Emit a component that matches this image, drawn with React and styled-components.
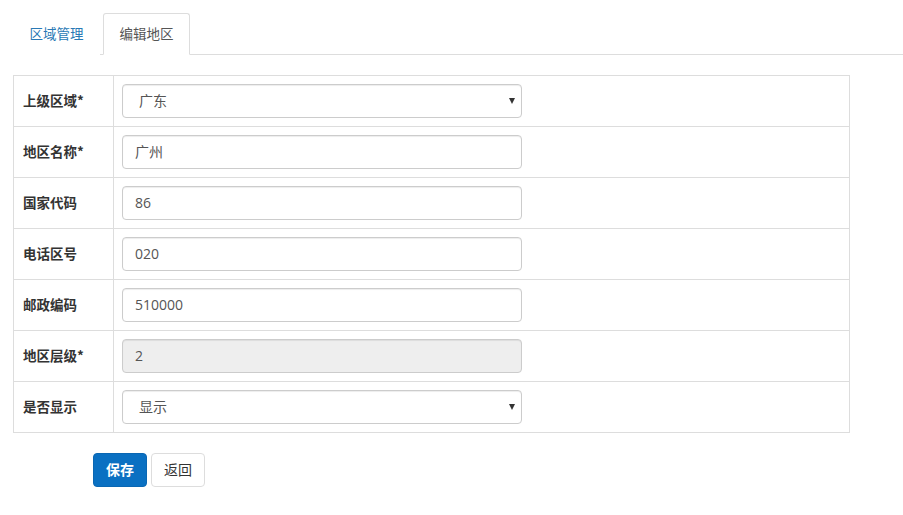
import React from 'react';
import styled, { createGlobalStyle } from 'styled-components';

const GlobalStyle = createGlobalStyle`
    html, body { margin: 0; padding: 0; background: #fff; }
    body {
        font-family: "Open Sans", "Noto Sans CJK SC", sans-serif;
        font-size: 13px;
        color: #333;
    }
`;

const rows = [
    { label: '上级区域*', type: 'select', value: '广东' },
    { label: '地区名称*', type: 'text', value: '广州' },
    { label: '国家代码', type: 'text', value: '86' },
    { label: '电话区号', type: 'text', value: '020' },
    { label: '邮政编码', type: 'text', value: '510000' },
    { label: '地区层级*', type: 'text', value: '2', disabled: true },
    { label: '是否显示', type: 'select', value: '显示' },
];

const App = () => {
    return (
        <Page>
            <GlobalStyle />
            <Tabs>
                <Tab>区域管理</Tab>
                <Tab active>编辑地区</Tab>
            </Tabs>
            <Table>
                {rows.map(row => (
                    <Row key={row.label}>
                        <Label>{row.label}</Label>
                        <Cell>
                            {row.type === 'select' ? (
                                <SelectBox>
                                    <span>{row.value}</span>
                                    <Caret />
                                </SelectBox>
                            ) : (
                                <Input defaultValue={row.value} disabled={row.disabled} />
                            )}
                        </Cell>
                    </Row>
                ))}
            </Table>
            <Actions>
                <Button primary>保存</Button>
                <Button>返回</Button>
            </Actions>
        </Page>
    );
};

export default App;

const Page = styled.div`
    padding-top: 13px;
`;
const Tabs = styled.div`
    display: flex;
    margin-left: 13px;
    border-bottom: 1px solid #ddd;
    height: 41px;
`;
const Tab = styled.div`
    width: 87px;
    height: 42px;
    box-sizing: border-box;
    display: flex;
    align-items: center;
    justify-content: center;
    padding-bottom: 2px;
    margin-right: 3px;
    color: ${p => (p.active ? '#555' : '#2a79b5')};
    background: #fff;
    border: 1px solid ${p => (p.active ? '#ddd' : 'transparent')};
    border-bottom-color: ${p => (p.active ? '#fff' : 'transparent')};
    border-radius: 3px 3px 0 0;
    font-family: "Noto Sans CJK SC", sans-serif;
    font-size: 13.5px;
`;
const Table = styled.div`
    margin: 20px 0 0 13px;
    width: 837px;
    box-sizing: border-box;
    border: 1px solid #ddd;
    border-bottom: none;
`;
const Row = styled.div`
    display: flex;
    height: 51px;
    border-bottom: 1px solid #ddd;
    box-sizing: border-box;
`;
const Label = styled.div`
    width: 100px;
    box-sizing: border-box;
    border-right: 1px solid #ddd;
    padding: 0 0 2px 9px;
    display: flex;
    align-items: center;
    font-family: "Noto Sans CJK SC", sans-serif;
    font-weight: bold;
    font-size: 13.5px;
    color: #333;
`;
const Cell = styled.div`
    display: flex;
    align-items: center;
    padding-left: 8px;
`;
const Input = styled.input`
    width: 400px;
    height: 34px;
    box-sizing: border-box;
    border: 1px solid #ccc;
    border-radius: 4px;
    padding: 0 12px 2px;
    font-family: "Open Sans", "Noto Sans CJK SC", sans-serif;
    font-size: 14px;
    color: #555;
    background: #fff;
    box-shadow: inset 0 1px 1px rgba(0, 0, 0, 0.075);
    &:disabled {
        background: #eee;
        color: #555;
    }
`;
const SelectBox = styled.div`
    width: 400px;
    height: 34px;
    box-sizing: border-box;
    border: 1px solid #ccc;
    border-radius: 4px;
    padding: 0 6px 2px 16px;
    display: flex;
    align-items: center;
    justify-content: space-between;
    font-family: "Noto Sans CJK SC", sans-serif;
    font-size: 14px;
    color: #555;
    box-shadow: inset 0 1px 1px rgba(0, 0, 0, 0.075);
`;
const Caret = styled.span`
    width: 0;
    height: 0;
    margin-top: 2px;
    border-left: 3.5px solid transparent;
    border-right: 3.5px solid transparent;
    border-top: 6px solid #333;
`;
const Actions = styled.div`
    display: flex;
    gap: 4px;
    margin: 20px 0 0 93px;
`;
const Button = styled.button`
    height: 34px;
    padding: 0 12px 2px;
    border-radius: 4px;
    font-family: "Noto Sans CJK SC", sans-serif;
    font-size: 14px;
    border: 1px solid ${p => (p.primary ? '#0a67b3' : '#ddd')};
    background: ${p => (p.primary ? '#0a70c2' : '#fff')};
    color: ${p => (p.primary ? '#fff' : '#333')};
    font-weight: ${p => (p.primary ? 'bold' : 'normal')};
`;
